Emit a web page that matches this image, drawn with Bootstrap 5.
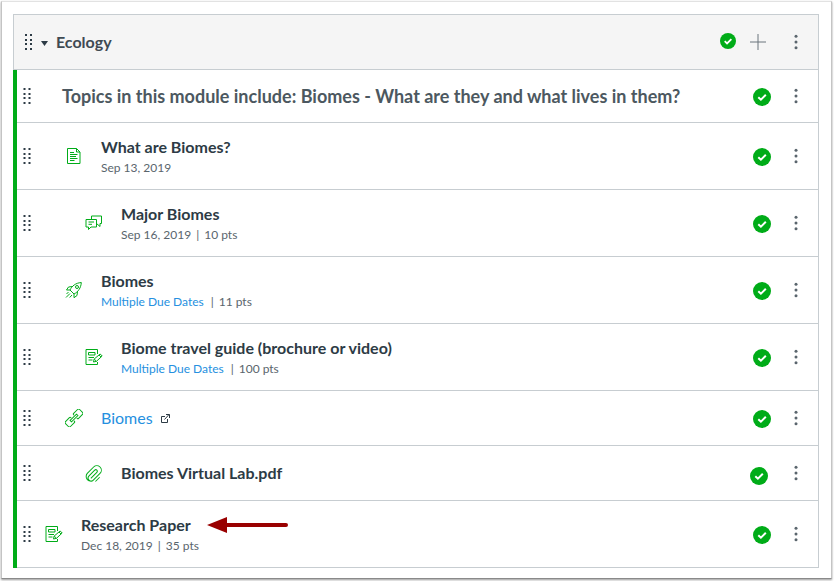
<!DOCTYPE html>
<html lang="en">
<head>
<meta charset="utf-8">
<meta name="viewport" content="width=device-width, initial-scale=1">
<title>Ecology module</title>
<link href="https://cdn.jsdelivr.net/npm/bootstrap@5.3.0/dist/css/bootstrap.min.css" rel="stylesheet">
<style>
  body { font-family: Lato, "Liberation Sans", sans-serif; color: #2d3b45; background: #fff; }
  .frame { margin: 1px 2px 3px 1px; padding: 12px 12px 10px 11px; border: 1px solid #c4c4c4; border-top-color: #e2e2e2; border-bottom-color: #8a8a8a; box-shadow: 0 1px 2px #999; }
  .module { border: 1px solid #c7cdd1; border-bottom: 0; }
  .module-head { min-height: 55px; background: #f5f5f5; border-bottom: 1px solid #c7cdd1; padding-left: 10px; }
  .module-head h2 { font-size: 16px; line-height: 24px; font-weight: 700; color: #3f4a53; }
  .items { border-left: 4px solid #00ac18; margin-left: -1px; }
  .item-row { min-height: 67px; border-bottom: 1px solid #c7cdd1; padding-left: 6px; }
  .item-row.short { min-height: 55px; }
  .item-row.heading { min-height: 53px; }
  .plain { background: none; border: 0; padding: 0; display: flex; flex: none; color: inherit; }
  .kind { width: 18px; height: 18px; flex: none; color: #00ac18; margin: 0 18px 0 14px; }
  .indent-1 { margin-left: 34px; }
  .indent-2 { margin-left: 54px; }
  .kind, .ext { fill: none; stroke: currentColor; }
  .item-title { font-size: 16px; line-height: 22px; font-weight: 700; margin: 0; }
  .item-title.big { font-size: 18px; font-weight: 700; color: #4c5860; margin-left: 31px; }
  .item-meta { font-size: 12px; line-height: 19px; color: #5a656d; margin: 0; }
  .bar { margin: 0 5px; }
  .item-meta a + .bar { margin-left: 7px; }
  a { color: #2590e0; text-decoration: none; }
  .item-title a { font-weight: 400; }
  .tools { padding-right: 13px; }
  .check { width: 18px; height: 18px; display: block; margin: 2px 16px 0 0; }
  .near .check { margin: 6px 19px 0 0; }
  .module-head .check { width: 16px; height: 16px; margin: 0 14px 2px 0; }
  .module-head .plus { margin-right: 21px; }
  .kebab { color: #5a656d; }
</style>
<script src="https://cdn.jsdelivr.net/npm/bootstrap@5.3.0/dist/js/bootstrap.bundle.min.js"></script>
</head>
<body>
<svg class="d-none" aria-hidden="true">
  <symbol id="grip" viewBox="0 0 8 18"><g fill="#2d3b45"><path d="M.5 1h2v2h-2zM5.500 1h2v2h-2zM.5 6h2v2h-2zM5.500 6h2v2h-2zM.5 10h2v2h-2zM5.500 10h2v2h-2zM.5 15h2v2h-2zM5.500 15h2v2h-2z"/></g></symbol>
  <symbol id="dots" viewBox="0 0 18 18"><g fill="currentColor"><circle cx="9" cy="3.200" r="1.500"/><circle cx="9" cy="9" r="1.500"/><circle cx="9" cy="14.800" r="1.500"/></g></symbol>
  <symbol id="ok" viewBox="0 0 18 18"><circle cx="9" cy="9" r="9" fill="#00ac18"/><path d="M5.300 9.200l2.600 2.500 4.900-4.900" fill="none" stroke="#fff" stroke-width="2"/></symbol>
  <symbol id="page" viewBox="0 0 18 18"><path d="M2.500 1.500h9l3.500 3.500v11.500h-12.500zM11.500 1.500v3.500h3.500M5 5.500h4M5 7.500h7.500M5 9.500h6M5 11.500h7.500M5 13.500h4.500"/></symbol>
  <symbol id="talk" viewBox="0 0 18 18"><path d="M1 5.500h10.500v7.500h-5.500l-2.500 2.500v-2.500h-2.500zM3.500 8h5.500M3.500 10.300h3.500M6.500 5.500v-3.500h10v7.500h-1.500v3l-3.500-3"/></symbol>
  <symbol id="rocket" viewBox="0 0 18 18"><path d="M5 9c2-4 5.500-7 11.300-7.500C16 7 13 11 9 13zM7.500 5.500L3.500 6 1.500 9l3.500 0 4 4v3.700l3-2.200.5-4M3.500 11l-2 2M5 12.500l-4 4M7 14l-2.300 2.500"/><circle cx="12" cy="6" r="1.500"/></symbol>
  <symbol id="task" viewBox="0 0 18 18"><path d="M12.500 6v-4.500h-11.500v15h11.500v-2.500M3.500 4.500h6.500v2.500h-6.500zM3.500 9.500h5.500M3.500 12h4M8.500 14l.7-3 6-5 2 2-5.700 5.300zM14 7l2 2M9.200 11l2.300 2.300"/></symbol>
  <symbol id="chain" viewBox="0 0 18 18"><g transform="rotate(-45 9 9)"><path d="M7 7V6.500q0-1-1-1H.5q-1.500 0-1.500 1.500v4q0 1.500 1.500 1.500H6q1 0 1-1V11M11 7V6.500q0-1 1-1h5.500q1.500 0 1.500 1.500v4q0 1.500-1.500 1.500H12q-1 0-1-1V11M4.500 8h9v2h-9z"/></g></symbol>
  <symbol id="clip" viewBox="0 0 18 18"><g transform="rotate(-45 9 9)"><path d="M3 10.500h8.500a1.500 1.500 0 0 0 0-3H3.500a3 3 0 0 0 0 6h9.500a4.500 4.500 0 0 0 0-9H4M3 10.500M0 11.500a5 5 0 0 1 4-7M10 16H4"/></g></symbol>
</svg>

<main class="frame">
  <section class="module">
    <header class="module-head d-flex align-items-center">
      <button class="plain" aria-label="Move module"><svg width="9" height="18"><use href="#grip"/></svg></button>
      <button class="plain ms-2 me-2" aria-label="Collapse module"><svg width="7" height="9" viewBox="0 0 7 9"><path d="M0 3h7L3.500 8z" fill="#2d3b45"/></svg></button>
      <h2 class="m-0 me-auto">Ecology</h2>
      <div class="tools d-flex align-items-center">
        <button class="plain" aria-label="Published"><svg class="check"><use href="#ok"/></svg></button>
        <button class="plain plus" aria-label="Add item"><svg width="16" height="16" viewBox="0 0 16 16"><path d="M8 0v16M0 8h16" stroke="#6b757c"/></svg></button>
        <button class="plain kebab" aria-label="Module options"><svg width="18" height="18"><use href="#dots"/></svg></button>
      </div>
    </header>

    <div class="items">
      <div class="item-row heading d-flex align-items-center">
        <button class="plain" aria-label="Move item"><svg width="8" height="18"><use href="#grip"/></svg></button>
        <h3 class="item-title big me-auto">Topics in this module include: Biomes - What are they and what lives in them?</h3>
        <div class="tools d-flex align-items-center">
          <button class="plain" aria-label="Published"><svg class="check"><use href="#ok"/></svg></button>
          <button class="plain kebab" aria-label="Item options"><svg width="18" height="18"><use href="#dots"/></svg></button>
        </div>
      </div>

      <div class="item-row d-flex align-items-center">
        <button class="plain" aria-label="Move item"><svg width="8" height="18"><use href="#grip"/></svg></button>
        <svg class="kind indent-1"><use href="#page"/></svg>
        <div class="me-auto"><h3 class="item-title">What are Biomes?</h3><p class="item-meta">Sep 13, 2019</p></div>
        <div class="tools d-flex align-items-center">
          <button class="plain" aria-label="Published"><svg class="check"><use href="#ok"/></svg></button>
          <button class="plain kebab" aria-label="Item options"><svg width="18" height="18"><use href="#dots"/></svg></button>
        </div>
      </div>

      <div class="item-row d-flex align-items-center">
        <button class="plain" aria-label="Move item"><svg width="8" height="18"><use href="#grip"/></svg></button>
        <svg class="kind indent-2"><use href="#talk"/></svg>
        <div class="me-auto"><h3 class="item-title">Major Biomes</h3><p class="item-meta">Sep 16, 2019<span class="bar">|</span>10 pts</p></div>
        <div class="tools d-flex align-items-center">
          <button class="plain" aria-label="Published"><svg class="check"><use href="#ok"/></svg></button>
          <button class="plain kebab" aria-label="Item options"><svg width="18" height="18"><use href="#dots"/></svg></button>
        </div>
      </div>

      <div class="item-row d-flex align-items-center">
        <button class="plain" aria-label="Move item"><svg width="8" height="18"><use href="#grip"/></svg></button>
        <svg class="kind indent-1"><use href="#rocket"/></svg>
        <div class="me-auto"><h3 class="item-title">Biomes</h3><p class="item-meta"><a href="#">Multiple Due Dates</a><span class="bar">|</span>11 pts</p></div>
        <div class="tools d-flex align-items-center">
          <button class="plain" aria-label="Published"><svg class="check"><use href="#ok"/></svg></button>
          <button class="plain kebab" aria-label="Item options"><svg width="18" height="18"><use href="#dots"/></svg></button>
        </div>
      </div>

      <div class="item-row d-flex align-items-center">
        <button class="plain" aria-label="Move item"><svg width="8" height="18"><use href="#grip"/></svg></button>
        <svg class="kind indent-2"><use href="#task"/></svg>
        <div class="me-auto"><h3 class="item-title">Biome travel guide (brochure or video)</h3><p class="item-meta"><a href="#">Multiple Due Dates</a><span class="bar">|</span>100 pts</p></div>
        <div class="tools d-flex align-items-center">
          <button class="plain" aria-label="Published"><svg class="check"><use href="#ok"/></svg></button>
          <button class="plain kebab" aria-label="Item options"><svg width="18" height="18"><use href="#dots"/></svg></button>
        </div>
      </div>

      <div class="item-row short d-flex align-items-center">
        <button class="plain" aria-label="Move item"><svg width="8" height="18"><use href="#grip"/></svg></button>
        <svg class="kind indent-1"><use href="#chain"/></svg>
        <h3 class="item-title me-auto d-flex align-items-center"><a href="#">Biomes</a><svg class="ext ms-2" width="9" height="9" viewBox="0 0 9 9"><path d="M4 2.500H.5v6h6V5M3.500 5.500l4.500-5M5 .5h3.500V4"/></svg></h3>
        <div class="tools d-flex align-items-center">
          <button class="plain" aria-label="Published"><svg class="check"><use href="#ok"/></svg></button>
          <button class="plain kebab" aria-label="Item options"><svg width="18" height="18"><use href="#dots"/></svg></button>
        </div>
      </div>

      <div class="item-row short d-flex align-items-center">
        <button class="plain" aria-label="Move item"><svg width="8" height="18"><use href="#grip"/></svg></button>
        <svg class="kind indent-2"><use href="#clip"/></svg>
        <h3 class="item-title me-auto">Biomes Virtual Lab.pdf</h3>
        <div class="tools near d-flex align-items-center">
          <button class="plain" aria-label="Published"><svg class="check"><use href="#ok"/></svg></button>
          <button class="plain kebab" aria-label="Item options"><svg width="18" height="18"><use href="#dots"/></svg></button>
        </div>
      </div>

      <div class="item-row d-flex align-items-center">
        <button class="plain" aria-label="Move item"><svg width="8" height="18"><use href="#grip"/></svg></button>
        <svg class="kind"><use href="#task"/></svg>
        <div class="me-auto">
          <h3 class="item-title d-flex align-items-center">Research Paper
            <svg class="ms-3" width="82" height="16" viewBox="0 0 82 16"><path d="M0 8L20 0v16z" fill="#900"/><path d="M18 8h61" stroke="#900" stroke-width="4" stroke-linecap="round"/></svg></h3>
          <p class="item-meta">Dec 18, 2019<span class="bar">|</span>35 pts</p>
        </div>
        <div class="tools d-flex align-items-center">
          <button class="plain" aria-label="Published"><svg class="check"><use href="#ok"/></svg></button>
          <button class="plain kebab" aria-label="Item options"><svg width="18" height="18"><use href="#dots"/></svg></button>
        </div>
      </div>
    </div>
  </section>
</main>
</body>
</html>
